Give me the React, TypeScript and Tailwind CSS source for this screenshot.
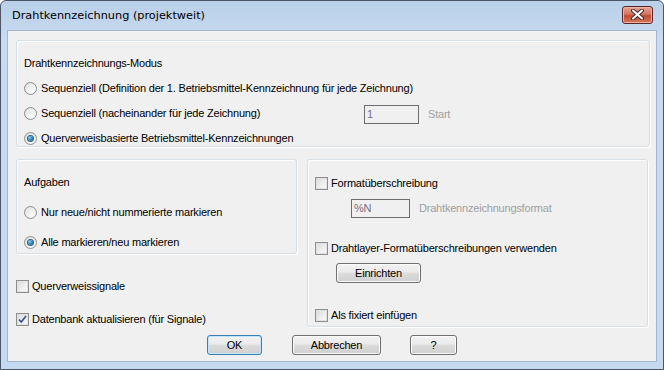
import React from 'react';

const font = { fontFamily: '"Liberation Sans", Arial, sans-serif' };

const Radio = ({ checked }: { checked?: boolean }) => (
  <span className="relative flex h-[13px] w-[13px] shrink-0 items-center justify-center rounded-full border border-[#8e8f8f] bg-gradient-to-br from-[#dcdcdc] to-[#fbfbfb]">
    <span className="h-[9px] w-[9px] rounded-full bg-gradient-to-br from-[#e4e4e4] to-[#ffffff]" />
    {checked && (
      <span className="absolute h-[5px] w-[5px] rounded-full bg-[radial-gradient(circle_at_35%_35%,#7fd0f6,#1a6ea3_70%,#0b3d6b)] ring-1 ring-[#2a5d8a]" />
    )}
  </span>
);

const Check = ({ checked }: { checked?: boolean }) => (
  <span className="flex h-[13px] w-[13px] shrink-0 items-center justify-center border border-[#8e8f8f] bg-white">
    <span className="flex h-[11px] w-[11px] items-center justify-center border border-[#e0e0e0] bg-gradient-to-br from-[#dedede] to-[#fafafa]">
      {checked && (
        <svg width="9" height="9" viewBox="0 0 9 9">
          <path d="M1 4.5 L3.3 7 L8 1" stroke="#3d4f8d" strokeWidth="1.7" fill="none" />
        </svg>
      )}
    </span>
  </span>
);

const RadioRow = ({ checked, label }: { checked?: boolean; label: string }) => (
  <div className="flex h-4 items-center gap-[4px]">
    <Radio checked={checked} />
    <span>{label}</span>
  </div>
);

const CheckRow = ({ checked, label }: { checked?: boolean; label: string }) => (
  <div className="flex h-4 items-center gap-[3px]">
    <Check checked={checked} />
    <span>{label}</span>
  </div>
);

const Button = ({ label, width, primary }: { label: string; width: string; primary?: boolean }) => (
  <button
    className={`${width} h-[20px] rounded-[3px] border ${primary ? 'border-[#3c7fb1] shadow-[inset_0_0_0_1px_#bfe7fb]' : 'border-[#707070] shadow-[inset_0_0_0_1px_#fcfcfc]'} bg-[linear-gradient(#f2f2f2_0%,#ebebeb_45%,#dddddd_50%,#cfcfcf_100%)] text-[11px] leading-none text-black`}
  >
    {label}
  </button>
);

const Group = ({ className, children }: { className: string; children: React.ReactNode }) => (
  <div className={`rounded-[3px] border border-[#d5dfe5] shadow-[inset_1px_1px_0_#ffffff,1px_1px_0_#ffffff] ${className}`}>
    {children}
  </div>
);

export default function App() {
  return (
    <div className="h-[370px] w-[664px] bg-white" style={font}>
      <div className="flex h-full w-full flex-col rounded-t-[6px] border border-[#4b5566] bg-[linear-gradient(#b9d0ea,#c8daf0_40px,#c5d9f1)]">
        {/* title bar */}
        <div className="flex h-[29px] shrink-0 items-center justify-between pl-[11px] pr-[10px]">
          <span className="pt-[1px] text-black" style={{ fontFamily: '"DejaVu Sans", "Liberation Sans", sans-serif', fontSize: '11.3px' }}>
            Drahtkennzeichnung (projektweit)
          </span>
          <div className="mt-[-2px] flex h-[18px] w-[31px] items-center justify-center rounded-[3px] border border-[#5b2626] bg-[linear-gradient(#e8a493,#d2755f_45%,#c24a33_55%,#d77a58)] shadow-[inset_0_0_0_1px_#eab3a4]">
            <svg width="13" height="11" viewBox="0 0 13 11">
              <path d="M2 1.5 L11 9.5 M11 1.5 L2 9.5" stroke="#4a2a2a" strokeWidth="4" strokeLinecap="round" />
              <path d="M2 1.5 L11 9.5 M11 1.5 L2 9.5" stroke="#ffffff" strokeWidth="2" strokeLinecap="round" />
            </svg>
          </div>
        </div>

        {/* client area */}
        <div className="mx-[6px] flex h-[332px] flex-col border border-[#a3b6cf] bg-[#f0f0f0] pl-[8px] pr-[6px] pt-[9px] text-[11px] tracking-[-0.2px] text-black">
          <Group className="flex h-[107px] flex-col gap-[9px] pl-[7px] pt-[14px]">
            <div className="flex h-4 items-center">Drahtkennzeichnungs-Modus</div>
            <RadioRow label="Sequenziell (Definition der 1. Betriebsmittel-Kennzeichnung für jede Zeichnung)" />
            <div className="flex h-4 items-center">
              <div className="flex w-[340px] items-center gap-[4px]">
                <Radio />
                <span>Sequenziell (nacheinander für jede Zeichnung)</span>
              </div>
              <div className="mt-[3px] flex h-[19px] w-[55px] items-center border border-[#6d6d6d] pl-[2px] text-[#7a6c88]">1</div>
              <span className="ml-[9px] mt-[3px] text-[#a0a0a0]">Start</span>
            </div>
            <RadioRow checked label="Querverweisbasierte Betriebsmittel-Kennzeichnungen" />
          </Group>

          <div className="mt-[12px] flex gap-[10px]">
            <div className="flex w-[281px] flex-col">
              <Group className="flex h-[95px] flex-col gap-[14px] pl-[7px] pt-[14px]">
                <div className="flex h-4 items-center">Aufgaben</div>
                <RadioRow label="Nur neue/nicht nummerierte markieren" />
                <RadioRow checked label="Alle markieren/neu markieren" />
              </Group>
              <div className="mt-[24px] flex flex-col gap-[17px]">
                <CheckRow label="Querverweissignale" />
                <CheckRow checked label="Datenbank aktualisieren (für Signale)" />
              </div>
            </div>

            <Group className="flex h-[168px] w-[341px] flex-col pl-[7px] pt-[15px]">
              <CheckRow label="Formatüberschreibung" />
              <div className="ml-[36px] mt-[8px] flex items-center">
                <div className="flex h-[19px] w-[59px] items-center border border-[#6d6d6d] pl-[2px] text-[#7a6c88]">%N</div>
                <span className="ml-[9px] text-[#a0a0a0]">Drahtkennzeichnungsformat</span>
              </div>
              <div className="mt-[22px]">
                <CheckRow label="Drahtlayer-Formatüberschreibungen verwenden" />
              </div>
              <div className="ml-[21px] mt-[7px]">
                <Button label="Einrichten" width="w-[85px]" />
              </div>
              <div className="mt-[24px]">
                <CheckRow label="Als fixiert einfügen" />
              </div>
            </Group>
          </div>

          <div className="mt-[8px] flex">
            <div className="ml-[191px]">
              <Button primary label="OK" width="w-[55px]" />
            </div>
            <div className="ml-[30px]">
              <Button label="Abbrechen" width="w-[89px]" />
            </div>
            <div className="ml-[29px]">
              <Button label="?" width="w-[47px]" />
            </div>
          </div>
        </div>
      </div>
    </div>
  );
}
